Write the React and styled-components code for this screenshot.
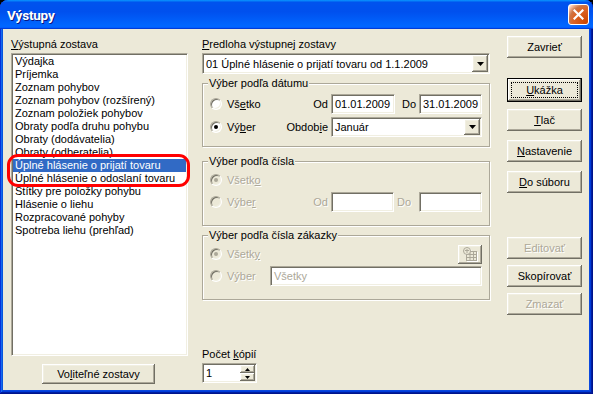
import React from 'react';
import styled, { createGlobalStyle, css } from 'styled-components';

const GlobalStyle = createGlobalStyle`
  html, body { margin: 0; padding: 0; background: #000; }
  body { font-family: "Liberation Sans", Arial, sans-serif; font-size: 11px; color: #000; }
  #root { width: 593px; height: 394px; }
  * { box-sizing: border-box; }
`;

const raised = css`
  background: #ECE9D8;
  box-shadow: inset -1px -1px 0 #716F64, inset 1px 1px 0 #fff, inset -2px -2px 0 #ACA899, inset 2px 2px 0 #F1EFE2;
`;

const sunken = css`
  border: 1px solid;
  border-color: #ACA899 #fff #fff #ACA899;
  box-shadow: inset 1px 1px 0 #716F64, inset -1px -1px 0 #F1EFE2;
`;

const grayText = css`
  color: #ACA899;
  text-shadow: 1px 1px 0 #fff;
`;

const Window = styled.div`
  width: 593px;
  height: 394px;
  display: flex;
  flex-direction: column;
  background: #0A48DE;
  border-radius: 8px 8px 0 0;
  overflow: hidden;
  box-shadow: inset -1px -1px #00138c, inset 1px 1px #0831d9, inset -2px -2px #001ea0,
    inset 2px 2px #166aee, inset -3px -3px #003bda, inset 3px 3px #0855dd;
`;

const TitleBar = styled.div`
  height: 29px;
  flex: none;
  display: flex;
  align-items: center;
  justify-content: space-between;
  padding: 0 4px 0 7px;
  border-radius: 8px 8px 0 0;
  background: linear-gradient(180deg, #0997ff 0%, #0053ee 8%, #0050ee 40%, #0066ff 88%, #0066ff 93%, #005bff 95%, #003dd7 96%, #003dd7 100%);
`;

const Title = styled.span`
  font-family: Roboto, "Liberation Sans", sans-serif;
  font-weight: bold;
  font-size: 13.5px;
  letter-spacing: -0.2px;
  color: #fff;
  text-shadow: 1px 1px 0 #0a1883;
  margin-top: 1px;
`;

const CloseButton = styled.div`
  width: 21px;
  height: 21px;
  border: 1px solid #fff;
  border-radius: 3px;
  display: flex;
  align-items: center;
  justify-content: center;
  background: radial-gradient(circle at 90% 90%, #cc4600 0%, #dc6527 55%, #cd7546 70%, #ffccb2 90%, #fff 100%);
`;

const Frame = styled.div`
  flex: 1;
  display: flex;
  padding: 0 4px 4px 3px;
`;

const Body = styled.div`
  flex: 1;
  background: #ECE9D8;
  display: flex;
  align-items: flex-start;
  padding: 7px 7px 0 8px;
`;

const Column = styled.div`
  position: relative;
  display: flex;
  flex-direction: column;
  flex: none;
  width: ${p => p.$w}px;
  margin-left: ${p => p.$ml || 0}px;
`;

const Label = styled.div`
  font-size: 11px;
  line-height: 13px;
  height: 13px;
  white-space: nowrap;
  margin-top: ${p => p.$mt || 0}px;
  ${p => p.$disabled && grayText}
`;

const ListBox = styled.div`
  ${sunken};
  background: #fff;
  height: 303px;
  margin-top: 2px;
  padding: 1px;
`;

const ListItem = styled.div`
  height: 13px;
  line-height: 13px;
  padding-left: 2px;
  white-space: nowrap;
  background: ${p => (p.$selected ? '#316AC5' : 'transparent')};
  color: ${p => (p.$selected ? '#fff' : '#000')};
`;

const Annotation = styled.div`
  position: absolute;
  left: -4px;
  top: 118px;
  width: 183px;
  height: 33px;
  border: 3px solid #f00;
  border-radius: 11px;
  pointer-events: none;
`;

const Button = styled.div`
  ${raised};
  position: relative;
  width: ${p => p.$w || 75}px;
  height: ${p => (p.$default ? 24 : p.$h || 22)}px;
  margin-top: ${p => p.$mt || 0}px;
  margin-left: ${p => p.$ml || 0}px;
  display: flex;
  align-items: center;
  justify-content: center;
  font-size: 11px;
  white-space: nowrap;
  ${p => p.$default && css`border: 1px solid #000;`}
  ${p => p.$disabled && grayText}
`;

const FocusRing = styled.span`
  position: absolute;
  inset: 3px;
  border: 1px dotted #000;
`;

const Combo = styled.div`
  ${sunken};
  background: #fff;
  height: ${p => p.$h || 21}px;
  width: ${p => (p.$w ? `${p.$w}px` : 'auto')};
  flex: none;
  margin-top: ${p => p.$mt || 0}px;
  padding: 1px;
  display: flex;
  align-items: stretch;
`;

const ComboText = styled.span`
  flex: 1;
  padding-left: 2px;
  display: flex;
  align-items: center;
  white-space: nowrap;
  overflow: hidden;
`;

const DropButton = styled.span`
  ${raised};
  width: 16px;
  display: flex;
  align-items: center;
  justify-content: center;
`;

const TextBox = styled.div`
  ${sunken};
  background: #fff;
  height: 20px;
  width: ${p => (p.$w ? `${p.$w}px` : 'auto')};
  flex: ${p => (p.$w ? 'none' : 1)};
  padding: 1px 3px;
  display: flex;
  align-items: center;
  white-space: nowrap;
  ${p => p.$disabled && css`color: #ACA899;`}
`;

const Group = styled.div`
  position: relative;
  margin-top: ${p => p.$mt || 0}px;
  border: 1px solid #ACA899;
  box-shadow: inset 1px 1px 0 #fff, 1px 1px 0 #fff;
  padding: ${p => p.$pt}px 7px ${p => p.$pb}px 7px;
  display: flex;
  flex-direction: column;
  gap: ${p => p.$gap}px;
`;

const GroupTitle = styled.span`
  position: absolute;
  top: -7px;
  left: 5px;
  padding: 0 1px;
  background: #ECE9D8;
  line-height: 13px;
  white-space: nowrap;
`;

const Row = styled.div`
  height: 20px;
  display: flex;
  align-items: center;
`;

const RadioItem = styled.div`
  display: flex;
  align-items: center;
  gap: 5px;
  flex: ${p => (p.$w ? 'none' : 1)};
  width: ${p => (p.$w ? `${p.$w}px` : 'auto')};
  white-space: nowrap;
  ${p => p.$disabled && grayText}
`;

const RadioCircle = styled.span`
  position: relative;
  width: 12px;
  height: 12px;
  border-radius: 50%;
  border: 1px solid;
  border-color: #ACA899 #fff #fff #ACA899;
  box-shadow: inset 1px 1px 0 #716F64, inset -1px -1px 0 #F1EFE2;
  background: ${p => (p.$disabled ? '#ECE9D8' : '#fff')};
  text-shadow: none;
  flex: none;
  &::after {
    content: '';
    display: ${p => (p.$checked ? 'block' : 'none')};
    position: absolute;
    left: 3px;
    top: 3px;
    width: 4px;
    height: 4px;
    border-radius: 50%;
    background: ${p => (p.$disabled ? '#ACA899' : '#000')};
  }
`;

const FieldLabel = styled.span`
  white-space: nowrap;
  width: ${p => (p.$w ? `${p.$w}px` : 'auto')};
  text-align: ${p => p.$align || 'left'};
  padding: 0 ${p => p.$pr || 0}px 0 ${p => p.$pl || 0}px;
  flex: none;
  ${p => p.$disabled && grayText}
`;

const IconButton = styled.div`
  ${raised};
  width: 24px;
  height: 19px;
  display: flex;
  align-items: center;
  justify-content: center;
`;

const Spin = styled.div`
  ${sunken};
  background: #fff;
  width: 55px;
  height: 20px;
  margin-top: 2px;
  padding: 1px;
  display: flex;
`;

const SpinText = styled.span`
  flex: 1;
  padding-left: 2px;
  display: flex;
  align-items: center;
`;

const SpinButtons = styled.div`
  width: 15px;
  display: flex;
  flex-direction: column;
`;

const SpinPart = styled.span`
  ${raised};
  flex: 1;
  display: flex;
  align-items: center;
  justify-content: center;
`;

const Arrow = ({ up, w = 7, h = 4 }) => (
  <svg width={w} height={h} viewBox={`0 0 ${w} ${h}`}>
    {up ? (
      <polygon points={`0,${h} ${w},${h} ${w / 2},0`} fill="#000" />
    ) : (
      <polygon points={`0,0 ${w},0 ${w / 2},${h}`} fill="#000" />
    )}
  </svg>
);

const items = [
  'Výdajka',
  'Príjemka',
  'Zoznam pohybov',
  'Zoznam pohybov (rozšírený)',
  'Zoznam položiek pohybov',
  'Obraty podľa druhu pohybu',
  'Obraty (dodávatelia)',
  'Obraty (odberatelia)',
  'Úplné hlásenie o prijatí tovaru',
  'Úplné hlásenie o odoslaní tovaru',
  'Štítky pre položky pohybu',
  'Hlásenie o liehu',
  'Rozpracované pohyby',
  'Spotreba liehu (prehľad)',
];

const Radio = ({ checked, disabled, children, w }) => (
  <RadioItem $disabled={disabled} $w={w}>
    <RadioCircle $checked={checked} $disabled={disabled} />
    <span>{children}</span>
  </RadioItem>
);

const TableIcon = () => (
  <svg width="16" height="15" viewBox="0 0 16 15">
    <g fill="none" stroke="#fff" strokeWidth="1" transform="translate(1,1)">
      <rect x="4.5" y="4.5" width="10" height="9" />
      <path d="M4.5 7.5h10M4.5 10.5h10M8 4.5v9M11.5 4.5v9" />
      <circle cx="5" cy="4" r="3.5" />
    </g>
    <g fill="none" stroke="#ACA899" strokeWidth="1">
      <rect x="4.5" y="4.5" width="10" height="9" fill="#ECE9D8" />
      <path d="M4.5 7.5h10M4.5 10.5h10M8 4.5v9M11.5 4.5v9" />
      <circle cx="5" cy="4" r="3.5" fill="#ECE9D8" />
      <path d="M3 3.5h4M5 2v4" />
    </g>
  </svg>
);

export default function App() {
  return (
    <>
      <GlobalStyle />
      <Window>
        <TitleBar>
          <Title>Výstupy</Title>
          <CloseButton>
            <svg width="11" height="11" viewBox="0 0 11 11">
              <path d="M1.5 1.5l8 8M9.5 1.5l-8 8" stroke="#fff" strokeWidth="2.2" strokeLinecap="square" />
            </svg>
          </CloseButton>
        </TitleBar>
        <Frame>
          <Body>
            <Column $w={177}>
              <Label $mt={2}>
                <u>V</u>ýstupná zostava
              </Label>
              <ListBox>
                {items.map((t, i) => (
                  <ListItem key={t} $selected={i === 8}>
                    {t}
                  </ListItem>
                ))}
              </ListBox>
              <Button $w={113} $h={20} $mt={8} $ml={31}>
                Vo<u>l</u>iteľné zostavy
              </Button>
              <Annotation />
            </Column>

            <Column $w={288} $ml={14}>
              <Label $mt={2}>
                <u>P</u>redloha výstupnej zostavy
              </Label>
              <Combo $mt={2}>
                <ComboText>01 Úplné hlásenie o prijatí tovaru od 1.1.2009</ComboText>
                <DropButton>
                  <Arrow />
                </DropButton>
              </Combo>

              <Group $mt={9} $pt={10} $pb={9} $gap={3}>
                <GroupTitle>Výber podľa dátumu</GroupTitle>
                <Row>
                  <Radio>
                    Vš<u>e</u>tko
                  </Radio>
                  <FieldLabel $pr={3}>Od</FieldLabel>
                  <TextBox $w={64}>01.01.2009</TextBox>
                  <FieldLabel $w={24} $align="right" $pr={3}>
                    Do
                  </FieldLabel>
                  <TextBox $w={63}>31.01.2009</TextBox>
                </Row>
                <Row>
                  <Radio checked>
                    Vý<u>b</u>er
                  </Radio>
                  <FieldLabel $pr={3}>
                    Obdob<u>i</u>e
                  </FieldLabel>
                  <Combo $w={151} $h={20}>
                    <ComboText>Január</ComboText>
                    <DropButton>
                      <Arrow />
                    </DropButton>
                  </Combo>
                </Row>
              </Group>

              <Group $mt={14} $pt={8} $pb={13} $gap={2}>
                <GroupTitle>Výber podľa čísla</GroupTitle>
                <Row>
                  <Radio checked disabled>
                    Všetk<u>o</u>
                  </Radio>
                </Row>
                <Row>
                  <Radio disabled>
                    Výbe<u>r</u>
                  </Radio>
                  <FieldLabel $pr={3} $disabled>
                    Od
                  </FieldLabel>
                  <TextBox $w={63} />
                  <FieldLabel $w={25} $pl={3} $disabled>
                    Do
                  </FieldLabel>
                  <TextBox $w={63} />
                </Row>
              </Group>

              <Group $mt={9} $pt={8} $pb={13} $gap={2}>
                <GroupTitle>Výber podľa čísla zákazky</GroupTitle>
                <Row>
                  <Radio checked disabled>
                    Všetk<u>y</u>
                  </Radio>
                  <IconButton>
                    <TableIcon />
                  </IconButton>
                </Row>
                <Row>
                  <Radio disabled w={60}>
                    Výber
                  </Radio>
                  <TextBox $disabled>Všetky</TextBox>
                </Row>
              </Group>

              <Label $mt={48}>
                Počet <u>k</u>ópií
              </Label>
              <Spin>
                <SpinText>1</SpinText>
                <SpinButtons>
                  <SpinPart>
                    <Arrow up w={5} h={3} />
                  </SpinPart>
                  <SpinPart>
                    <Arrow w={5} h={3} />
                  </SpinPart>
                </SpinButtons>
              </Spin>
            </Column>

            <Column $w={75} $ml={17}>
              <Button>Zavrieť</Button>
              <Button $default $mt={20}>
                <FocusRing />
                <span>
                  <u>U</u>kážka
                </span>
              </Button>
              <Button $mt={7}>
                <u>T</u>lač
              </Button>
              <Button $mt={9}>
                <u>N</u>astavenie
              </Button>
              <Button $mt={9}>
                <u>D</u>o súboru
              </Button>
              <Button $mt={44} $disabled>
                Editovať
              </Button>
              <Button $mt={6}>Skopírovať</Button>
              <Button $mt={6} $disabled>
                Zmazať
              </Button>
            </Column>
          </Body>
        </Frame>
      </Window>
    </>
  );
}
